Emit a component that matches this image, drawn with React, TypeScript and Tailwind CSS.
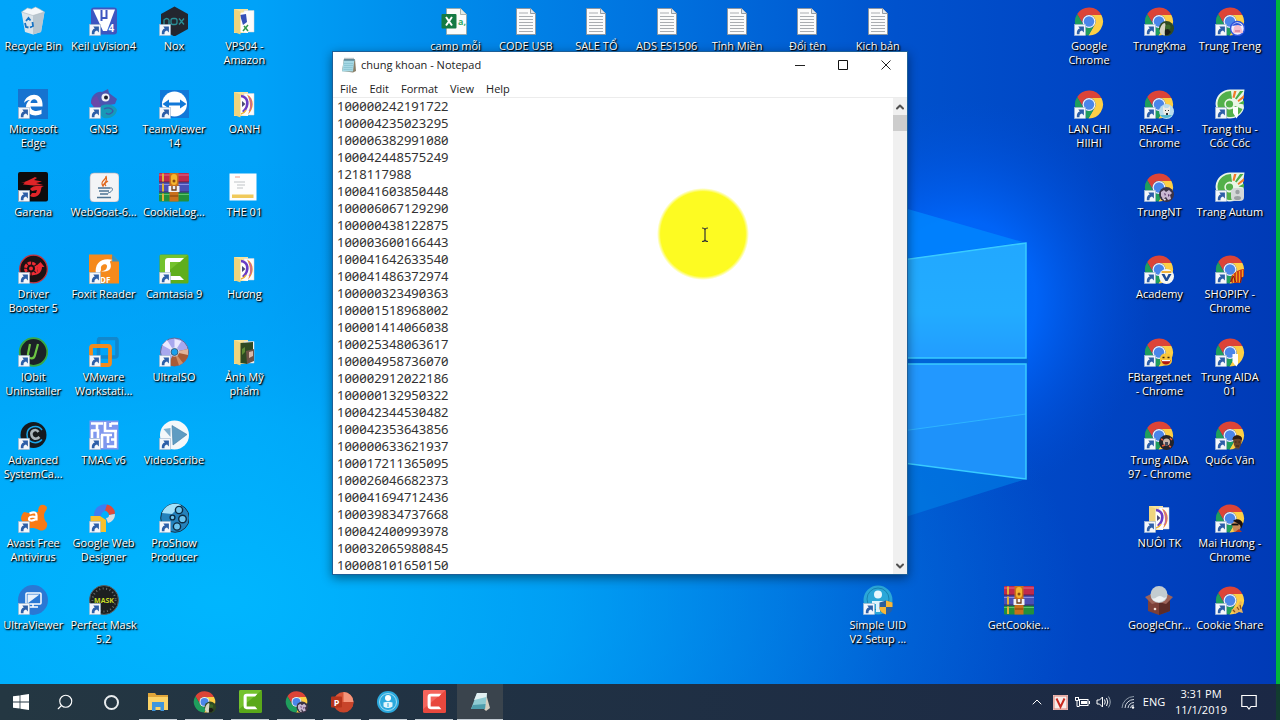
import React from 'react';
import { ChevronDown, ChevronUp, Search } from 'lucide-react';

interface DesktopItem {
  label: string;
  col: number;
  row: number;
  icon: React.ReactNode;
  shortcut?: boolean;
}

const ShortcutArrow = () => (
  <g>
    <rect x="0.5" y="18.5" width="11" height="11" fill="#f4f7fb" stroke="#9fb6cf" strokeWidth="0.6" />
    <path d="M2.8 28.2c-.2-3.400 1-5.200 3-5.600L4.300 20.600h5.600v5.800L8 24.600c-1.900.4-2.700 1.500-2.500 3.600z" fill="#2d5fa8" />
  </g>
);

/* ---------- profile pictures shown on the Chrome shortcuts ---------- */

const badges: Record<string, React.ReactNode> = {
  kma: (
    <g>
      <circle cx="22.500" cy="22.500" r="7.500" fill="#2f4a22" />
      <path d="M15.500 25c1-5 3-8 5.500-8 1.500 3-1 7 0 12.500-3 0-5-2-5.500-4.500z" fill="#d8d6c4" />
      <circle cx="24" cy="21" r="2.500" fill="#3c6a2a" />
      <path d="M21 24l3-1 3 3-3 3h-3z" fill="#1c1c18" />
    </g>
  ),
  treng: (
    <g>
      <circle cx="22.500" cy="22.500" r="7" fill="#f2efff" stroke="#2f55dc" strokeWidth="1.500" />
      <path d="M19 21l4-3 3 3 2 6h-10z" fill="#f6bccb" />
      <path d="M17 20c2-4 8-4 10 0l-4-1z" fill="#2f55dc" />
      <path d="M20 25h5" stroke="#c9607c" />
    </g>
  ),
  reach: (
    <g>
      <circle cx="22.500" cy="22.500" r="7.500" fill="#b9dcec" />
      <path d="M19 17l2 2h3l2-2v5l-1.500 6h-4L19 22z" fill="#ecebe6" />
      <path d="M21 21h1v1h-1zM24 21h1v1h-1zM22 24h2v2h-2z" fill="#333" />
      <path d="M16 26h12a7.500 7.500 0 0 1-12 0z" fill="#58b9cf" />
    </g>
  ),
  nt: (
    <g>
      <circle cx="22.500" cy="22.500" r="7.500" fill="#3b3346" />
      <path d="M17 20l3-2 2 2 3-2 3 3-2 2 1 4-3 1-2-3-3 2-2-3z" fill="#c9b8d2" />
      <path d="M20 21l2 1-1 2zM24 22l2 1-2 2z" fill="#5f3b72" />
      <path d="M18 26l4 1-1 2z" fill="#f0e3ee" />
    </g>
  ),
  academy: (
    <g>
      <circle cx="22.500" cy="22.500" r="7.500" fill="#f6f6f2" />
      <path d="M17.500 17h10v2h-10z" fill="#f0b23a" />
      <path d="M17.500 20h3l2 4 2-4h3l-4 7h-2z" fill="#1c4c96" />
    </g>
  ),
  shopify: (
    <g>
      <path d="M15.500 27c0-6 5-11 13.500-12v7l-2 2-1 5h-9z" fill="#c93a1a" />
      <path d="M18.500 20v9M21.500 18v10M24.500 17v12M27.500 16v7" stroke="#f2a11c" strokeWidth="1.200" />
      <path d="M15.500 28l3-6 2 6M25 29l2-6" stroke="#7a1d10" fill="none" />
    </g>
  ),
  fbtarget: (
    <g>
      <rect x="16" y="16.500" width="12" height="12" rx="5" fill="#f8c53a" />
      <path d="M18.500 20.500h2M23.500 20.500h2" stroke="#3a2408" strokeWidth="1.300" />
      <path d="M17.500 23h9c0 6-9 6-9 0z" fill="#b3190f" />
      <path d="M18 23h8v1.200h-8z" fill="#fff" />
    </g>
  ),
  aida01: <path d="M17.500 17h5.500v10l-1.500 2.500-2-2-2-3z" fill="#fdfdfd" />,
  aida97: (
    <g>
      <circle cx="22.500" cy="22.500" r="7.500" fill="#23242a" />
      <circle cx="22.500" cy="22" r="3.500" fill="#c8b4a8" />
      <path d="M17 19l2 1M26 18l2 2M18 26l3-1M25 26l2 1" stroke="#e65a3c" strokeWidth="1.400" />
      <path d="M21 22h3v3h-3z" fill="#44485a" />
    </g>
  ),
  quoc: (
    <g>
      <path d="M18 19c0-4 8-5 9 0l-1 6-2 4h-3l-2-4z" fill="#6b4327" />
      <path d="M17.500 20c0-6 9-6 9.500-1l-.5 1c-2-1.500-5-1.500-8-.5z" fill="#2c1c12" />
      <path d="M18 29.500c1-2 6-2 7 0z" fill="#3c4c66" />
      <path d="M20 22h1.500M23.500 22H25M21 26h3" stroke="#2c1c12" strokeWidth="0.800" />
    </g>
  ),
  mai: (
    <g>
      <path d="M17 21c3-4 8-3 9 0l-1 5-3 3h-3l-1-3z" fill="#c98a55" />
      <path d="M18 18c3-3 9-2 10 3l-2 5-1-4-3-2z" fill="#1a1210" />
      <path d="M16.500 21.500h7" stroke="#111" strokeWidth="1.800" />
      <path d="M20 29l4-3 3 3z" fill="#b5341c" />
    </g>
  ),
  cookie: (
    <g>
      <path d="M16 25l6-3 3-6 2 1-1 4 2 7-4-1-4 2z" fill="#e9b45c" />
      <path d="M18 25l2 2M22 22l2 3M25 20l1 4" stroke="#8e5217" strokeWidth="1.200" />
    </g>
  ),
};

const ChromeArt = () => (
  <g transform="translate(15 15.500)">
    <path d="M-11.830-7.490A14 14 0 0 1 12.400-6.500H0A6.500 6.500 0 0 0-5.630 3.250z" fill="#dc4437" />
    <path d="M12.400-6.500A14 14 0 0 1-.570 13.990L5.630 3.250A6.500 6.500 0 0 0 0-6.500z" fill="#fdcf45" />
    <path d="M-.570 13.990A14 14 0 0 1-11.830-7.490L-5.630 3.250A6.500 6.500 0 0 0 5.630 3.250z" fill="#1f9e5c" />
    <circle r="6.500" fill="#f3f5f2" />
    <circle r="5.200" fill="#4a86ea" />
  </g>
);

const chrome = (badge?: string) => (
  <>
    <ChromeArt />
    {badge && badges[badge]}
  </>
);

const cocCoc = (badge: React.ReactNode) => (
  <>
    <path d="M29.500 0.500H15A14.500 14.500 0 1 0 29 19l-1-8z" fill="#eaf6e6" />
    <path d="M16 2A13 13 0 1 0 27.500 20l-7.500-3A5.500 5.500 0 1 1 17 10z" fill="#52b04a" />
    <circle cx="14.500" cy="15" r="3.600" fill="#52b04a" />
    <path d="M17.500 8.500l1.500-6.500h2.500l-2 7zM22.500 11.500L29 6v3l-5.500 4z" fill="#f27a2a" />
    <path d="M20 9.500L25 2h3.500l-7 8.500zM23.500 14.500l5.500-3v4z" fill="#4cae48" />
    {badge}
  </>
);

const winrar = (
  <>
    <rect x="0" y="1" width="30" height="9.500" rx="1" fill="#c02a4c" />
    <rect x="0" y="10.500" width="30" height="10" rx="1" fill="#4b50b4" />
    <rect x="0" y="20.500" width="30" height="9" rx="1" fill="#23903c" />
    <path d="M0 3h30" stroke="#e0698a" />
    <path d="M0 12.500h30" stroke="#8a8ee0" />
    <path d="M0 22.500h30" stroke="#5cc46e" />
    <path d="M0 10h30M0 20h30" stroke="#3a1c44" strokeWidth="0.800" />
    <path d="M4 1.500v8M4 11.500v8M4 21.500v7.500" stroke="#e0b23a" strokeWidth="2" />
    <rect x="10.500" y="1" width="9" height="28.500" fill="#c9701c" />
    <rect x="12" y="2" width="6" height="11" rx="3" fill="#f4b52e" />
    <circle cx="15" cy="9" r="1.500" fill="#8a4a10" />
    <path d="M9.500 14h11v6h-11z" fill="#f1f1f4" />
    <path d="M13 14v4h4v-4" stroke="#6c3a18" strokeWidth="1.300" fill="none" />
    <path d="M11 24h8" stroke="#8c4810" strokeWidth="1.200" />
  </>
);

const textFile = (
  <>
    <path d="M5.500 2.500h14l5 5v21h-19z" fill="#fbfbfb" stroke="#8c939a" strokeWidth="0.900" />
    <path d="M19.500 2.500v5h5" fill="#dfe6ee" stroke="#8c939a" strokeWidth="0.900" />
    <path d="M8 7h9M8 10.500h14M8 13.500h14M8 16.500h14M8 19.500h14M8 22.500h14M8 25.500h14" stroke="#a0a4a8" strokeWidth="0.900" />
  </>
);

const folder = (inside: React.ReactNode) => (
  <>
    <path d="M5 3h14v24H5z" fill="#f7e39a" />
    <path d="M15 4.500h10V26H15z" fill="#fbfbfb" stroke="#d6d6d6" strokeWidth="0.500" />
    <path d="M11 7l8-1.500V27l-8-1z" fill="#fdfdfd" />
    {inside}
    <path d="M5 3l6.500 2.500v23L5 26z" fill="#efd47e" />
  </>
);

const photoFolder = folder(
  <>
    <path d="M12 7c7 1 9 9 2 16" fill="none" stroke="#6a3cc4" strokeWidth="2.600" />
    <path d="M18 5.500c8 4 7 15 1 20 1-3 2-5 2-9s-1-7-3-11z" fill="#ef8a30" />
    <path d="M20 8c3 4 3 10 0 14" stroke="#b05ccc" strokeWidth="1" fill="none" />
    <path d="M13 12v6l3.500-3z" fill="#4a4a78" />
    <path d="M12 25c2-.5 4-2 5-4" stroke="#f0b838" strokeWidth="1.600" fill="none" />
  </>
);

/* ---------- desktop icons ---------- */

const items: DesktopItem[] = [
  {
    label: 'Recycle Bin', col: 1, row: 1,
    icon: (
      <>
        <path d="M3.500 6h23l-3.500 20-8 2.500-8-2.500z" fill="#dbe4ea" />
        <path d="M15 8l11.500-2-3.500 20-8 2.500z" fill="#b9c6cf" />
        <path d="M3.500 6l6-4 4 1 4-2 4 2 5 3-11.500 3.500z" fill="#f4f7f9" stroke="#a9b7c0" strokeWidth="0.600" />
        <path d="M8 15l2.500-3 2 2.500M14.500 16l.5 4-3 1.500M7 17l1 4 2.500.5" stroke="#1672c4" strokeWidth="1.800" fill="none" />
      </>
    ),
  },
  {
    label: 'Keil uVision4', col: 2, row: 1, shortcut: true,
    icon: (
      <>
        <rect x="2" y="1.500" width="26" height="27" rx="3" fill="#3d56c0" />
        <path d="M4 3.500h22L18 25h-4z" fill="#fff" />
        <path d="M12.500 4v8h5V4M12.500 9v6" stroke="#3d56c0" strokeWidth="2" fill="none" />
        <text x="19.500" y="26" fontSize="10" fontWeight="700" fill="#fff">4</text>
      </>
    ),
  },
  {
    label: 'Nox', col: 3, row: 1, shortcut: true,
    icon: (
      <>
        <path d="M15.500 0.500L29 8v15l-13.500 7.500L2 23V8z" fill="#23262f" />
        <g fill="none" stroke="#2a8f96" strokeWidth="1.300">
          <path d="M5 19v-5q3-3 5 0v5" />
          <rect x="12" y="12.500" width="6" height="6" rx="2" />
          <path d="M20 12.500l5 6M25 12.500l-5 6" />
        </g>
      </>
    ),
  },
  {
    label: 'VPS04 -\nAmazon', col: 4, row: 1,
    icon: folder(
      <>
        <path d="M11 9l6-1 1 8-4 3z" fill="#3450b8" />
        <path d="M15 20l4 5M19 19l-5 6" stroke="#2f9a48" strokeWidth="1.500" />
      </>
    ),
  },
  {
    label: 'Microsoft\nEdge', col: 1, row: 2, shortcut: true,
    icon: (
      <>
        <rect width="30" height="30" fill="#1673d0" />
        <path d="M6 14c2-10 18-12 18.500 1v2.500H12.500c.5 5 7 5.500 11 3v4.500c-6 3-15 1.500-15.500-7 0-3 1.500-5.500 4-7-3 0-5 1.500-6 3zM12.500 14h7c0-5-6.500-5-7 0z" fill="#fff" />
      </>
    ),
  },
  {
    label: 'GNS3', col: 2, row: 2, shortcut: true,
    icon: (
      <>
        <path d="M2 14C2 6 8 2 13 3l6-3 1 4 8 6-2 5-6 1-5 5-8-2z" fill="#4b55b0" />
        <path d="M2 14c1-4 3-6 6-7l4 10-6 3z" fill="#6a48a8" />
        <path d="M12 17c6-3 14-1 16 4-1 6-7 9-13 8-3-1-5-4-3-12z" fill="#1799b8" />
        <path d="M15 20c4-2 8-1 9 2-1 3-5 4-7 2" stroke="#3d57a8" strokeWidth="1.300" fill="none" />
        <circle cx="16.500" cy="8.500" r="4" fill="#eef1f6" />
        <circle cx="17" cy="8.500" r="2" fill="#1c2030" />
      </>
    ),
  },
  {
    label: 'TeamViewer\n14', col: 3, row: 2, shortcut: true,
    icon: (
      <>
        <rect x="1" y="1" width="29" height="28" fill="#1178d8" />
        <circle cx="15.500" cy="15" r="12.500" fill="#fff" />
        <path d="M3.500 15l6.500-4.500v3h11v-3l6.500 4.500-6.500 4.500v-3H10v3z" fill="#1178d8" />
      </>
    ),
  },
  { label: 'OANH', col: 4, row: 2, icon: photoFolder },
  {
    label: 'Garena', col: 1, row: 3, shortcut: true,
    icon: (
      <>
        <rect width="30" height="29.500" rx="2" fill="#0d0b0c" />
        <path d="M3 11c4-1 10-4 14-6l2 1-3 2 8 1.500-6 1.500 7 2-9 .5-11-1 2-2z" fill="#e02428" />
        <path d="M12 17c2-3 7-4 14-3-4 1-2 3-4 7-2 4-7 5-10 3l2-3 4 0 1-3-5 1z" fill="#e02428" />
      </>
    ),
  },
  {
    label: 'WebGoat-6...', col: 2, row: 3,
    icon: (
      <>
        <rect x="1" y="1" width="29" height="29" rx="4" fill="#f3f4f6" stroke="#b0a8b4" strokeWidth="0.600" />
        <path d="M17 4c1 4-7 5-3 10 1-4 5-3 3-10zM19 9c-3 2-4 3-2 5" stroke="#e0661c" strokeWidth="1.300" fill="none" />
        <path d="M9 16h12M10 19h10M11 22h8M8 25.500h14" stroke="#4d7394" strokeWidth="1.400" />
        <path d="M21 16c4-1 3 4-2 5" stroke="#4d7394" fill="none" />
      </>
    ),
  },
  { label: 'CookieLog...', col: 3, row: 3, icon: winrar },
  {
    label: 'THE 01', col: 4, row: 3,
    icon: (
      <>
        <rect x="0.500" y="1.500" width="27" height="27" fill="#fdfdfd" />
        <path d="M6 5h5" stroke="#f09a8a" />
        <path d="M5 10h11M8 13h8M8 16h6" stroke="#b8bcc0" strokeWidth="0.900" />
        <rect x="3" y="22.500" width="21.500" height="3.500" fill="#f0c95a" />
      </>
    ),
  },
  {
    label: 'Driver\nBooster 5', col: 1, row: 4, shortcut: true,
    icon: (
      <>
        <circle cx="15.500" cy="15" r="13.800" fill="#1c1214" stroke="#c8323c" strokeWidth="1.200" />
        <circle cx="13" cy="14.500" r="5.500" fill="none" stroke="#ee2c34" strokeWidth="3" strokeDasharray="3.400 1" />
        <path d="M16 20l4-3V13h-3l5.500-5 4 5H24c0 5-4 8-8 8z" fill="#ee2c34" />
        <circle cx="13" cy="14.500" r="2" fill="#ee2c34" />
      </>
    ),
  },
  {
    label: 'Foxit Reader', col: 2, row: 4, shortcut: true,
    icon: (
      <>
        <path d="M0 0.500h23l7 7V29.500H0z" fill="#f58a1c" />
        <path d="M23 0.500l7 7h-7z" fill="#3f8fb8" />
        <path d="M7 20C5 9 13 3 24 6c-2 0-3 1-3 2 3 7-2 11-9 9 4 0 6-2 6-5s-7-2-6 3c0 3-2 5-5 5z" fill="#fff" />
        <text x="11" y="28.500" fontSize="8" fontWeight="700" fill="#fff">DF</text>
      </>
    ),
  },
  {
    label: 'Camtasia 9', col: 3, row: 4, shortcut: true,
    icon: (
      <>
        <rect x="0.500" y="0.500" width="29" height="29" rx="1.500" fill="#5fae1c" />
        <path d="M1 1h28L1 24z" fill="#74c22c" />
        <path d="M25 4H9Q6 4 6 7v16q0 3 3 3h16l-4-4H11V8h10z" fill="#fff" />
      </>
    ),
  },
  { label: 'Hương', col: 4, row: 4, icon: photoFolder },
  {
    label: 'IObit\nUninstaller', col: 1, row: 5, shortcut: true,
    icon: (
      <>
        <circle cx="15.500" cy="15" r="13.800" fill="#1c2227" stroke="#39a845" strokeWidth="1.800" />
        <path d="M12 7l-2 10c-1 5 6 6 7 1l3-11" stroke="#6cc644" strokeWidth="2.200" fill="none" />
      </>
    ),
  },
  {
    label: 'VMware\nWorkstati...', col: 2, row: 5, shortcut: true,
    icon: (
      <>
        <rect x="9.500" y="1.500" width="18.500" height="18.500" rx="2" fill="none" stroke="#1287cc" strokeWidth="3.600" />
        <rect x="2" y="9" width="19" height="19" rx="2" fill="none" stroke="#f38b1c" strokeWidth="3.800" />
      </>
    ),
  },
  {
    label: 'UltraISO', col: 3, row: 5, shortcut: true,
    icon: (
      <>
        <circle cx="15.500" cy="15" r="14" fill="#a8a8ee" stroke="#606a98" />
        <path d="M15.500 15L29 12a14 14 0 0 1-20 15.500z" fill="#a85c38" />
        <path d="M15.500 15l13.500-3 0 6z" fill="#e0b49a" />
        <path d="M15.500 15L24 26l-4 2.500z" fill="#cf8f68" />
        <path d="M15.500 15L3 8l5-5zM15.500 15l0-13 7 2z" fill="#e9e8ff" />
        <circle cx="15.500" cy="15" r="4.500" fill="#dfe8f2" />
        <circle cx="15.500" cy="15" r="3.500" fill="#18a0ee" stroke="#3a4a60" strokeWidth="0.800" />
      </>
    ),
  },
  {
    label: 'Ảnh Mỹ\nphẩm', col: 4, row: 5,
    icon: folder(
      <>
        <path d="M11 6l13-1v16l-6 6-7-1z" fill="#2e4a22" />
        <path d="M17 14l8-2v12l-7 3z" fill="#6d5348" />
        <path d="M20 15l4-1v5l-4 2z" fill="#d9b8a8" />
        <path d="M13 12l3-2v5l-3 3z" fill="#5d8a34" />
      </>
    ),
  },
  {
    label: 'Advanced\nSystemCa...', col: 1, row: 6, shortcut: true,
    icon: (
      <>
        <circle cx="15.500" cy="15" r="13" fill="#15191e" />
        <path d="M24 10c-4-6-15-4-15 4.500s10 10.500 15 5" stroke="#1ba6ea" strokeWidth="1.500" fill="none" />
        <path d="M20.500 12c-3-4-8-1-7 3s5 5 8 2" stroke="#aab4bc" strokeWidth="2.600" fill="none" />
      </>
    ),
  },
  {
    label: 'TMAC v6', col: 2, row: 6, shortcut: true,
    icon: (
      <>
        <rect x="0.500" y="0.500" width="29" height="29" fill="#7f97ee" />
        <path d="M2 3.500h12M8 3v7M2 10.500h7v8M3 10v8M16 2v9h12M22 3.500h7M21.500 3v4M12 15h11M13 15v13M19 14v9M26.500 11v17M18 26.500h9M22 19.500h4" stroke="#fff" strokeWidth="2.600" fill="none" />
      </>
    ),
  },
  {
    label: 'VideoScribe', col: 3, row: 6, shortcut: true,
    icon: (
      <>
        <circle cx="15.500" cy="15" r="14.500" fill="#f4f8fa" />
        <path d="M13 5.500L28 14.500 14 25z" fill="#5f9cc2" stroke="#3f7ca6" strokeWidth="0.600" />
        <path d="M4.500 9l7-1v9z" fill="#7eb0cf" />
      </>
    ),
  },
  {
    label: 'Avast Free\nAntivirus', col: 1, row: 7, shortcut: true,
    icon: (
      <>
        <path d="M6 9l5 1 9-1c0-7 4-9 8-6 3 3-2 5-2 9s1 6 3 8c1 5-3 9-8 7-5-3-9-2-13-1L3 16c0-3 1-5 3-7z" fill="#f87a14" />
        <path d="M11.500 10.500c6-2.500 7-.5 7 2v5M18 14c-6-1-7 .5-7 2s3 2.500 7 0" stroke="#fff" strokeWidth="2.200" fill="none" />
      </>
    ),
  },
  {
    label: 'Google Web\nDesigner', col: 2, row: 7, shortcut: true,
    icon: (
      <>
        <path d="M5 13A11 10.500 0 0 1 18 1.500v6a6 6 0 0 0-6 5.500z" fill="#3f7cf0" />
        <path d="M18 1.500c5 1 8 5 8 9l-6 2c0-2-1-4-4-5z" fill="#dd4a3c" />
        <path d="M26 11c0 5-3 8-7 9l-2-5c2 0 3-1 3-3z" fill="#d8dcde" />
        <path d="M1.500 13H11l6 4v12H8l-6.500-9z" fill="#f8c02c" />
      </>
    ),
  },
  {
    label: 'ProShow\nProducer', col: 3, row: 7, shortcut: true,
    icon: (
      <>
        <circle cx="16" cy="15" r="14.300" fill="#2482bc" stroke="#15384e" />
        <path d="M3 10A14 14 0 0 1 22 2l-9 9z" fill="#a6e2fa" />
        <g fill="#6cc4ee" stroke="#0c2c42" strokeWidth="1.400">
          <circle cx="20" cy="7" r="3.600" />
          <circle cx="23.500" cy="16" r="3.800" />
          <circle cx="18" cy="23.500" r="3.600" />
          <circle cx="13.500" cy="14.500" r="2.400" />
        </g>
      </>
    ),
  },
  {
    label: 'UltraViewer', col: 1, row: 8, shortcut: true,
    icon: (
      <>
        <circle cx="15" cy="15" r="15" fill="#2a78d4" />
        <rect x="8" y="8" width="15" height="11" rx="1" fill="none" stroke="#fff" strokeWidth="1.500" />
        <path d="M9.500 9.500h12l-12 9z" fill="#e9f2fc" />
        <path d="M15 19v2.500M11 22h9" stroke="#fff" strokeWidth="1.500" />
      </>
    ),
  },
  {
    label: 'Perfect Mask\n5.2', col: 2, row: 8, shortcut: true,
    icon: (
      <>
        <circle cx="15" cy="15" r="14.500" fill="#1c1f20" stroke="#5a5f60" />
        <circle cx="15" cy="15" r="11.500" fill="none" stroke="#686e70" strokeDasharray="1 2.500" strokeWidth="2" />
        <text x="15" y="17.500" textAnchor="middle" fontSize="7" fontWeight="700" fill="#c8dc28">MASK</text>
      </>
    ),
  },
  {
    label: 'camp mỗi', col: 7, row: 1,
    icon: (
      <>
        <path d="M5.500 2.500h14l6 6v20h-20z" fill="#fbfcfb" stroke="#9aa59e" strokeWidth="0.800" />
        <path d="M19.500 2.500v6h6" fill="#e4ebe6" stroke="#9aa59e" strokeWidth="0.800" />
        <rect x="0.500" y="8" width="15" height="14.500" rx="1" fill="#157a43" />
        <path d="M5 11l6 8.500M11 11l-6 8.500" stroke="#fff" strokeWidth="2" />
        <text x="17" y="19" fontSize="9" fontWeight="700" fill="#35ad6c">a,</text>
      </>
    ),
  },
  { label: 'CODE USB', col: 8, row: 1, icon: textFile },
  { label: 'SALE TỔ', col: 9, row: 1, icon: textFile },
  { label: 'ADS ES1506', col: 10, row: 1, icon: textFile },
  { label: 'Tỉnh Miền', col: 11, row: 1, icon: textFile },
  { label: 'Đổi tên', col: 12, row: 1, icon: textFile },
  { label: 'Kịch bản', col: 13, row: 1, icon: textFile },
  {
    label: 'Simple UID\nV2 Setup ...', col: 13, row: 8, shortcut: true,
    icon: (
      <>
        <circle cx="15" cy="15" r="14.500" fill="#2ba7d8" />
        <circle cx="15" cy="14" r="11" fill="none" stroke="#1782b0" strokeWidth="1" />
        <circle cx="15" cy="9.500" r="4" fill="#e9f8fd" />
        <path d="M9 16h12v3h-4v8h-4v-8H9z" fill="#dff3fb" />
        <path d="M16.500 17.500l6.500-2 6.500 2v5c0 4-3 6-6.500 7-3.500-1-6.500-3-6.500-7z" fill="#2b5f9e" />
        <path d="M23 15.500l6.500 2V22H23zM16.500 22H23v7.500c-3.500-1-6.500-3-6.500-7.500z" fill="#f6b738" />
      </>
    ),
  },
  { label: 'GetCookie...', col: 15, row: 8, icon: winrar },
  { label: 'Google\nChrome', col: 16, row: 1, shortcut: true, icon: chrome() },
  { label: 'LAN CHI\nHIIHI', col: 16, row: 2, shortcut: true, icon: chrome() },
  { label: 'TrungKma', col: 17, row: 1, shortcut: true, icon: chrome('kma') },
  { label: 'REACH -\nChrome', col: 17, row: 2, shortcut: true, icon: chrome('reach') },
  { label: 'TrungNT', col: 17, row: 3, shortcut: true, icon: chrome('nt') },
  { label: 'Academy', col: 17, row: 4, shortcut: true, icon: chrome('academy') },
  { label: 'FBtarget.net\n- Chrome', col: 17, row: 5, shortcut: true, icon: chrome('fbtarget') },
  { label: 'Trung AIDA\n97 - Chrome', col: 17, row: 6, shortcut: true, icon: chrome('aida97') },
  { label: 'NUÔI TK', col: 17, row: 7, shortcut: true, icon: photoFolder },
  {
    label: 'GoogleChr...', col: 17, row: 8,
    icon: (
      <>
        <path d="M4 14l11 3 11-3v12l-11 4-11-4z" fill="#7d4038" />
        <path d="M15 17l11-3v12l-11 4z" fill="#5c2c28" />
        <path d="M1 12l6-3 8 8-7 2zM29 12l-6-3-8 8 7 2z" fill="#9c6258" />
        <circle cx="15" cy="9.500" r="8.500" fill="#c3ccd0" />
        <path d="M7.500 13a8.500 8.500 0 0 0 15-1c-3 2-4-1-7-1s-4 4-8 2z" fill="#eef1f2" />
        <circle cx="11" cy="24" r="1.300" fill="#f0d8d0" />
      </>
    ),
  },
  { label: 'Trung Treng', col: 18, row: 1, shortcut: true, icon: chrome('treng') },
  {
    label: 'Trang thu -\nCốc Cốc', col: 18, row: 2, shortcut: true,
    icon: cocCoc(<path d="M18 18h5v9l-1.500 2.500L20 27l-2-3z" fill="#fdfdfd" />),
  },
  {
    label: 'Trang Autum', col: 18, row: 3, shortcut: true,
    icon: cocCoc(
      <g>
        <rect x="16" y="16" width="13" height="13" rx="4" fill="#d4d8d8" />
        <circle cx="22.500" cy="20" r="2.200" fill="#9aa0a2" />
        <ellipse cx="22.500" cy="26" rx="3.500" ry="2" fill="#9aa0a2" />
      </g>
    ),
  },
  { label: 'SHOPIFY -\nChrome', col: 18, row: 4, shortcut: true, icon: chrome('shopify') },
  { label: 'Trung AIDA\n01', col: 18, row: 5, shortcut: true, icon: chrome('aida01') },
  { label: 'Quốc Văn', col: 18, row: 6, shortcut: true, icon: chrome('quoc') },
  { label: 'Mai Hương -\nChrome', col: 18, row: 7, shortcut: true, icon: chrome('mai') },
  { label: 'Cookie Share', col: 18, row: 8, shortcut: true, icon: chrome('cookie') },
];

const DesktopIcon: React.FC<{ item: DesktopItem }> = ({ item }) => (
  <button
    type="button"
    className="flex flex-col items-center gap-[3px]"
    style={{ gridColumn: item.col, gridRow: item.row }}
  >
    <svg viewBox="0 0 30 30" className="w-[30px] h-[30px] shrink-0" aria-hidden="true">
      {item.icon}
      {item.shortcut && <ShortcutArrow />}
    </svg>
    <span className="whitespace-pre text-center text-[11px] leading-[14px] text-white [text-shadow:1px_1px_2px_#000,1px_1px_1px_#000]">
      {item.label}
    </span>
  </button>
);

const Wallpaper = () => (
  <svg
    viewBox="0 0 1280 720"
    preserveAspectRatio="xMidYMid slice"
    className="absolute inset-0 w-full h-full"
    aria-hidden="true"
  >
    <defs>
      <linearGradient id="sky" x1="0" y1="0" x2="1" y2="0">
        <stop offset="0" stopColor="#00a5fa" />
        <stop offset="0.200" stopColor="#00a2f8" />
        <stop offset="0.300" stopColor="#0092ee" />
        <stop offset="0.500" stopColor="#0074e0" />
        <stop offset="0.700" stopColor="#0052cd" />
        <stop offset="0.850" stopColor="#0045c4" />
        <stop offset="1" stopColor="#003ab6" />
      </linearGradient>
      <radialGradient id="floor" gradientUnits="userSpaceOnUse" cx="0" cy="0" r="1" gradientTransform="translate(220 600) scale(860 440)">
        <stop offset="0" stopColor="#00b8ff" stopOpacity="0.900" />
        <stop offset="0.400" stopColor="#00b0fc" stopOpacity="0.650" />
        <stop offset="1" stopColor="#0090f0" stopOpacity="0" />
      </radialGradient>
      <radialGradient id="glow" gradientUnits="userSpaceOnUse" cx="0" cy="0" r="1" gradientTransform="translate(960 300) scale(190 200)">
        <stop offset="0" stopColor="#006cff" />
        <stop offset="0.400" stopColor="#0068ff" stopOpacity="0.850" />
        <stop offset="0.700" stopColor="#005cf0" stopOpacity="0.400" />
        <stop offset="1" stopColor="#0050dc" stopOpacity="0" />
      </radialGradient>
      <linearGradient id="pane" x1="0" y1="0" x2="0" y2="1">
        <stop offset="0" stopColor="#22a8ff" />
        <stop offset="0.600" stopColor="#22acff" />
        <stop offset="1" stopColor="#229cff" />
      </linearGradient>
    </defs>
    <rect width="1280" height="720" fill="url(#sky)" />
    <rect width="1280" height="720" fill="url(#floor)" />
    <rect width="1280" height="720" fill="url(#glow)" />
    <path d="M880 201l146 42v-1L880 262z" fill="#008cff" opacity="0.700" />
    <path d="M880 461l146 18-146 46z" fill="#0080e6" opacity="0.600" />
    <path d="M880 358h148v6H880z" fill="#0064d8" />
    <path d="M880 263l146-20v115H880z" fill="url(#pane)" />
    <path d="M880 364h146v115l-146-19z" fill="#2298ff" />
    <path d="M880 434l146-20v65l-146-19z" fill="#1e92fa" />
    <path d="M880 434l146-20" stroke="#2eb4ff" />
    <path d="M880 263l146-20v115H880M880 364h146v115l-146-19" fill="none" stroke="#38ccff" strokeWidth="1.500" />
  </svg>
);

/* ---------- notepad window ---------- */

const lines = [
  '100000242191722', '100004235023295', '100006382991080', '100042448575249', '1218117988',
  '100041603850448', '100006067129290', '100000438122875', '100003600166443', '100041642633540',
  '100041486372974', '100000323490363', '100001518968002', '100001414066038', '100025348063617',
  '100004958736070', '100002912022186', '100000132950322', '100042344530482', '100042353643856',
  '100000633621937', '100017211365095', '100026046682373', '100041694712436', '100039834737668',
  '100042400993978', '100032065980845', '100008101650150',
];

const menus = ['File', 'Edit', 'Format', 'View', 'Help'];

const NotepadGlyph = () => (
  <svg viewBox="0 0 16 16" className="w-4 h-4" aria-hidden="true">
    <path d="M3 2h11l1 12-3 1.500L1 14z" fill="#8a7f68" />
    <path d="M3 2h10.500L12 14.500H1z" fill="#a5d8e4" />
    <path d="M3 2h10.500v2H2.600z" fill="#6f9fae" />
    <path d="M4 .8v2.400M6 .8v2.400M8 .8v2.400M10 .8v2.400M12 .8v2.400" stroke="#5a6e78" strokeWidth="0.800" />
    <path d="M3 6.500h9M3 8.500h9M2.500 10.500h9M2.500 12.500h9" stroke="#7cbccb" strokeWidth="0.600" />
  </svg>
);

const NotepadWindow = () => (
  <section
    aria-label="chung khoan - Notepad"
    className="absolute left-[332px] top-[51px] w-[576px] flex flex-col bg-white border border-[#1d5f98] shadow-[0_3px_10px_rgba(0,0,0,0.45)]"
  >
    <header className="flex items-center h-[26px]">
      <div className="flex flex-1 items-center gap-1 pl-2">
        <NotepadGlyph />
        <h1 className="text-[11px] leading-4 text-[#222]">chung khoan - Notepad</h1>
      </div>
      <button type="button" aria-label="Minimize" className="flex w-[43px] h-full items-center justify-center">
        <svg viewBox="0 0 10 10" className="w-[10px] h-[10px]"><path d="M0 5.500h10" stroke="#222" /></svg>
      </button>
      <button type="button" aria-label="Maximize" className="flex w-[43px] h-full items-center justify-center">
        <svg viewBox="0 0 10 10" className="w-[10px] h-[10px]"><path d="M.5.5h9v9h-9z" stroke="#111" fill="none" /></svg>
      </button>
      <button type="button" aria-label="Close" className="flex w-[43px] h-full items-center justify-center">
        <svg viewBox="0 0 10 10" className="w-[10px] h-[10px]"><path d="M.5.5l9 9M9.500.5l-9 9" stroke="#222" /></svg>
      </button>
    </header>
    <nav className="flex items-center gap-3 h-5 pt-[2px] pl-[7px] border-b border-[#ececec]">
      {menus.map((m) => (
        <button key={m} type="button" className="text-[11px] leading-4 text-[#222]">{m}</button>
      ))}
    </nav>
    <div className="flex">
      <textarea
        aria-label="Document text"
        rows={28}
        spellCheck={false}
        defaultValue={lines.join('\n')}
        className="block flex-1 resize-none overflow-hidden pl-1 outline-none font-['Noto_Sans',sans-serif] slashed-zero text-[13px] leading-[17px] text-[#333]"
      />
      <div className="flex w-[14px] flex-col justify-between bg-[#f0f0f0]">
        <div className="flex flex-col">
          <button type="button" aria-label="Scroll up" className="flex h-[17px] items-center justify-center text-[#505050]">
            <ChevronUp className="w-3 h-3" strokeWidth={4} />
          </button>
          <div className="h-4 bg-[#cdcdcd]" />
        </div>
        <button type="button" aria-label="Scroll down" className="flex h-[17px] items-center justify-center text-[#505050]">
          <ChevronDown className="w-3 h-3" strokeWidth={4} />
        </button>
      </div>
    </div>
  </section>
);

const Pointer = () => (
  <svg viewBox="0 0 92 92" className="absolute left-[657px] top-[188px] w-[92px] h-[92px] pointer-events-none" aria-hidden="true">
    <defs>
      <radialGradient id="spot">
        <stop offset="0.920" stopColor="#fdfb22" />
        <stop offset="1" stopColor="#fdfb22" stopOpacity="0" />
      </radialGradient>
    </defs>
    <circle cx="46" cy="46" r="46" fill="url(#spot)" />
    <path d="M45 40q3 0 3 2q0-2 3-2M48 42v10M45 53.500q3 0 3-2q0 2 3 2" fill="none" stroke="#333" strokeWidth="1.200" />
  </svg>
);

/* ---------- taskbar ---------- */

const camtasiaTile = (light: string, dark: string) => (
  <svg viewBox="0 0 30 30" className="w-[23px] h-[23px]">
    <rect width="30" height="30" rx="2" fill={dark} />
    <path d="M0 2q0-2 2-2h28L0 25z" fill={light} />
    <path d="M24 5H10Q6 5 6 9v12q0 4 4 4h14l-3-3.500H10v-13h11z" fill="#fff" />
  </svg>
);

const chromeTask = (badge: string) => (
  <svg viewBox="0 0 30 30" className="w-[23px] h-[23px]">
    <ChromeArt />
    {badges[badge]}
  </svg>
);

const apps = [
  {
    name: 'File Explorer',
    icon: (
      <svg viewBox="0 0 22 20" className="w-[22px] h-5">
        <path d="M1 1h7l1.500 2H21v15H1z" fill="#e0a63a" />
        <path d="M1 5h20v13H1z" fill="#fbd367" />
        <path d="M5 10h12v9h-3.500v-4h-5v4H5z" fill="#3f96dc" />
      </svg>
    ),
  },
  { name: 'Chrome - TrungKma', icon: chromeTask('kma') },
  { name: 'Camtasia', icon: camtasiaTile('#74c22c', '#5aa81a') },
  { name: 'Chrome - TrungNT', icon: chromeTask('nt') },
  {
    name: 'PowerPoint',
    icon: (
      <svg viewBox="0 0 24 22" className="w-6 h-[22px]">
        <circle cx="13.500" cy="11" r="10" fill="#d95436" />
        <path d="M13.500 1a10 10 0 0 1 10 10h-10z" fill="#f5957a" />
        <path d="M23.500 11a10 10 0 0 1-20 1l10-1z" fill="#c8442a" />
        <rect x="1" y="5.500" width="11" height="11" rx="1" fill="#b5341c" />
        <text x="6.500" y="14.500" textAnchor="middle" fontSize="9" fontWeight="700" fill="#fff">P</text>
      </svg>
    ),
  },
  {
    name: 'Simple UID',
    icon: (
      <svg viewBox="0 0 24 24" className="w-6 h-6">
        <circle cx="12" cy="12" r="11" fill="#2ba9de" />
        <circle cx="12" cy="12" r="8.500" fill="none" stroke="#bfe8f6" strokeWidth="0.800" />
        <circle cx="12" cy="8" r="3" fill="#fff" />
        <path d="M7.500 12.500q4.500-1.500 9 0v4q-4.500 3-9 0z" fill="#e4f6fc" />
        <path d="M12 13v4" stroke="#2ba9de" />
      </svg>
    ),
  },
  { name: 'Camtasia Recorder', icon: camtasiaTile('#f4645c', '#e8483e') },
  {
    name: 'Notepad', active: true,
    icon: (
      <svg viewBox="0 0 22 22" className="w-[22px] h-[22px]">
        <path d="M17 3l4 14-4 3-2-2z" fill="#d6cfc0" />
        <path d="M8 2h10l-2 16H2z" fill="#8fcbd2" />
        <path d="M8 2h10l-.6 4L5 9z" fill="#e2f0f1" />
        <path d="M4 14l12.500-1L16 18H2z" fill="#4e9dac" />
      </svg>
    ),
  },
];

const Taskbar = () => (
  <footer className="relative flex h-9 shrink-0 items-stretch justify-between bg-linear-to-r from-[#243742] to-[#1b2845] text-white">
    <div className="flex">
      <button type="button" aria-label="Start" className="flex w-[42px] items-center justify-center">
        <svg viewBox="0 0 16 16" className="w-4 h-4" fill="#fff">
          <path d="M0 2.300L6.600 1.400v6.200H0zM7.400 1.300L16 0v7.600H7.400zM0 8.400h6.600v6.200L0 13.700zM7.400 8.400H16V16l-8.600-1.300z" />
        </svg>
      </button>
      <button type="button" aria-label="Search" className="flex w-[46px] items-center justify-center">
        <Search className="w-[18px] h-[18px] -scale-x-100" strokeWidth={1.5} />
      </button>
      <button type="button" aria-label="Cortana" className="flex w-[46px] items-center justify-center">
        <span className="w-[15px] h-[15px] rounded-full border-2 border-[#e8ecee]" />
      </button>
      <div className="flex pl-px">
        {apps.map((app) => (
          <button
            key={app.name}
            type="button"
            aria-label={app.name}
            className={`flex w-[46px] flex-col items-center ${app.active ? 'bg-[#3a444d]' : ''}`}
          >
            <span className="flex flex-1 items-center justify-center">{app.icon}</span>
            <span className={`h-px bg-[#c3ccd4] ${app.active ? 'w-full' : 'w-[38px]'}`} />
          </button>
        ))}
      </div>
    </div>
    <div className="flex items-center pr-[17px]">
      <button type="button" aria-label="Show hidden icons" className="flex w-6 justify-center">
        <ChevronUp className="w-4 h-4" strokeWidth={1.5} />
      </button>
      <span className="flex w-[22px] justify-center">
        <svg viewBox="0 0 15 15" className="w-[15px] h-[15px]">
          <rect width="15" height="15" fill="#f3d4d0" />
          <rect x="1" y="1" width="13" height="13" fill="#f8ecea" stroke="#d9837a" />
          <path d="M3.500 3.500l4 8.500 4-8.500" fill="none" stroke="#c8281e" strokeWidth="2" />
        </svg>
      </span>
      <span className="flex w-[22px] justify-center">
        <svg viewBox="0 0 16 12" className="w-4 h-3" fill="none" stroke="#fff">
          <rect x="5.500" y="3.500" width="8.500" height="6" />
          <path d="M15.500 5v3M1 1.500h4M1.500 1.500v3h3v-3M3 4.500v6h2.500" />
          <path d="M7 5h6v3H7z" fill="#fff" stroke="none" />
        </svg>
      </span>
      <span className="flex w-[22px] justify-center">
        <svg viewBox="0 0 16 14" className="w-4 h-[14px]" fill="none" stroke="#fff">
          <path d="M1 5h2.500l3-3v10l-3-3H1z" />
          <path d="M8.500 4.500q1.500 2.500 0 5M10.500 3q2.500 4 0 8" />
          <path d="M12.500 1.500q3.500 5.500 0 11" stroke="#9aa6b4" />
        </svg>
      </span>
      <span className="flex w-[26px] justify-center">
        <svg viewBox="0 0 14 14" className="w-[14px] h-[14px]" fill="none" stroke="#d4dae2">
          <path d="M1 13A12 12 0 0 1 13 1.500" stroke="#8d99a8" />
          <path d="M4 13A9 9 0 0 1 13 4.500M7 13A6 6 0 0 1 13 7.500M9.500 13A3.500 3.500 0 0 1 13 10" />
          <circle cx="12" cy="12.500" r="1.200" fill="#fff" stroke="none" />
        </svg>
      </span>
      <span className="w-[26px] text-center text-[11px] leading-4">ENG</span>
      <time className="w-[68px] text-center text-[11px] leading-4">
        <span className="block">3:31 PM</span>
        <span className="block">11/1/2019</span>
      </time>
      <button type="button" aria-label="Notifications" className="flex w-[28px] justify-center">
        <svg viewBox="0 0 16 16" className="w-4 h-4" fill="none" stroke="#fff" strokeWidth="1.200">
          <path d="M.8 1.500h14.400v11H10L8 15l-2-2.500H.8z" />
        </svg>
      </button>
    </div>
  </footer>
);

export default function App() {
  return (
    <div className="relative flex h-screen min-h-[720px] flex-col overflow-hidden font-['Open_Sans','Noto_Sans',sans-serif]">
      <Wallpaper />
      <main className="relative grid flex-1 grid-cols-18 grid-rows-8 -ml-[2px] pr-[15px] pt-[6px] pb-4">
        {items.map((item) => (
          <DesktopIcon key={`${item.col}-${item.row}`} item={item} />
        ))}
      </main>
      <NotepadWindow />
      <Taskbar />
      <div className="absolute inset-y-0 right-0 w-1 bg-linear-to-b from-[#00b43c] from-95% to-[#123c30] to-95%" />
      <Pointer />
    </div>
  );
}
